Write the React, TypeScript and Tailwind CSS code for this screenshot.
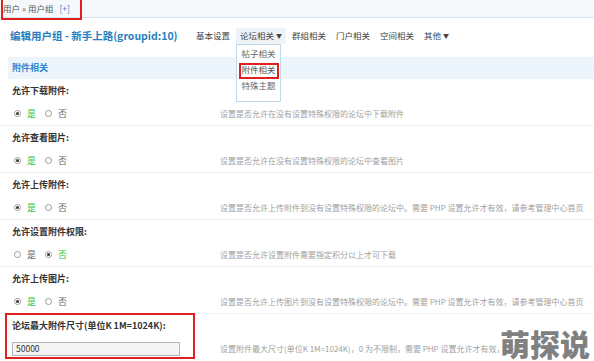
import React from "react";

const font = { fontFamily: '"Noto Sans CJK SC", "Noto Sans", sans-serif' };

type Row = {
  label: string;
  yes: boolean;
  desc: string;
};

const rows: Row[] = [
  { label: "允许下载附件:", yes: true, desc: "设置是否允许在没有设置特殊权限的论坛中下载附件" },
  { label: "允许查看图片:", yes: true, desc: "设置是否允许在没有设置特殊权限的论坛中查看图片" },
  {
    label: "允许上传附件:",
    yes: true,
    desc: "设置是否允许上传附件到没有设置特殊权限的论坛中。需要 PHP 设置允许才有效，请参考管理中心首页",
  },
  { label: "允许设置附件权限:", yes: false, desc: "设置是否允许设置附件需要指定积分以上才可下载" },
  {
    label: "允许上传图片:",
    yes: true,
    desc: "设置是否允许上传图片到没有设置特殊权限的论坛中。需要 PHP 设置允许才有效，请参考管理中心首页",
  },
];

function Radio({ checked }: { checked: boolean }) {
  return (
    <span className="w-[7px] h-[7px] rounded-full border border-[#9a9a9a] bg-white flex items-center justify-center">
      {checked && <span className="w-[3px] h-[3px] rounded-full bg-[#333]" />}
    </span>
  );
}

function Choice({ label, checked }: { label: string; checked: boolean }) {
  return (
    <div className="flex items-center gap-[6px]">
      <Radio checked={checked} />
      <span className={checked ? "text-[#2fc42f]" : "text-[#666]"}>{label}</span>
    </div>
  );
}

export default function App() {
  const nav = ["基本设置", "论坛相关", "群组相关", "门户相关", "空间相关", "其他"];

  return (
    <div className="w-[594px] h-[361px] overflow-hidden bg-white relative text-[9px] text-[#333]" style={font}>
      {/* breadcrumb */}
      <div className="h-[18px] bg-[#f5f9fc] border-b border-[#d9e6f0] flex items-center pl-[3px] relative">
        <span className="text-[#555] text-[8.5px]">用户 » 用户组</span>
        <span className="text-[#3a7cc0] text-[8.5px] ml-[6px]">[+]</span>
        <div className="absolute left-[1px] top-[-2px] w-[81px] h-[22px] border-2 border-[#e0201f]" />
      </div>

      {/* title + nav */}
      <div className="h-[39px] flex items-center pb-[4px]">
        <div className="pl-[10px] w-[192px] text-[#2b7dbc] font-bold text-[10.5px] whitespace-nowrap">
          编辑用户组 - 新手上路(groupid:10)
        </div>
        <div className="flex items-center text-[8.5px] text-[#444]">
          {nav.map((n) => (
            <div
              key={n}
              className={
                "relative px-[4px] h-[16px] flex items-center mr-[2px] " +
                (n === "论坛相关" ? "bg-[#eef3f7]" : "")
              }
            >
              <span>{n}</span>
              {(n === "论坛相关" || n === "其他") && <span className="ml-[2px] text-[6px]">▼</span>}
              {n === "论坛相关" && (
                <div className="absolute left-[0px] top-[16px] w-[45px] h-[58px] bg-white border-[1.5px] border-[#c3d8e7] flex flex-col items-center pt-[1px] z-10 text-[#666]">
                  <div className="h-[16px] flex items-center">帖子相关</div>
                  <div className="h-[16px] flex items-center relative text-[#555]">
                    附件相关
                    <div className="absolute left-[-3px] right-[-3px] top-[1px] bottom-[-1px] border-2 border-[#e0201f]" />
                  </div>
                  <div className="h-[16px] flex items-center">特殊主题</div>
                </div>
              )}
            </div>
          ))}
        </div>
      </div>

      {/* section header */}
      <div className="ml-[8px] h-[22px] bg-[#edf5fc] flex items-center pl-[4px] text-[#2b8ad0] font-bold text-[9px]">
        附件相关
      </div>

      {/* rows */}
      {rows.map((r) => (
        <div key={r.label} className="border-b border-[#eef1f4]">
          <div className="h-[23px] flex items-center pl-[12px] font-bold text-[9px] text-[#333]">{r.label}</div>
          <div className="h-[23px] flex items-center">
            <div className="w-[220px] flex items-center gap-[9px] pl-[14px]">
              <Choice label="是" checked={r.yes} />
              <Choice label="否" checked={!r.yes} />
            </div>
            <div className="text-[8px] text-[#a0a0a0] whitespace-nowrap">{r.desc}</div>
          </div>
        </div>
      ))}

      {/* last row */}
      <div className="relative">
        <div className="h-[23px] flex items-center pl-[12px] font-bold text-[9px] text-[#333]">
          论坛最大附件尺寸(单位K 1M=1024K):
        </div>
        <div className="h-[23px] flex items-center">
          <div className="w-[220px] pl-[12px]">
            <div className="w-[168px] h-[14px] border border-[#b5b5b5] bg-[#f4f4f4] flex items-center pl-[3px] text-[8.5px] text-[#333]">
              50000
            </div>
          </div>
          <div className="text-[8px] text-[#a0a0a0] whitespace-nowrap">
            设置附件最大尺寸(单位K 1M=1024K)，0 为不限制，需要 PHP 设置允许才有效，请参
          </div>
        </div>
        <div className="absolute left-[5px] top-[-1px] w-[190px] h-[46px] border-2 border-[#e0201f]" />
      </div>

      {/* watermark */}
      <div className="absolute right-[4px] bottom-[3px] text-[30px] font-black text-[#808080] leading-none">
        萌探说
      </div>
    </div>
  );
}
